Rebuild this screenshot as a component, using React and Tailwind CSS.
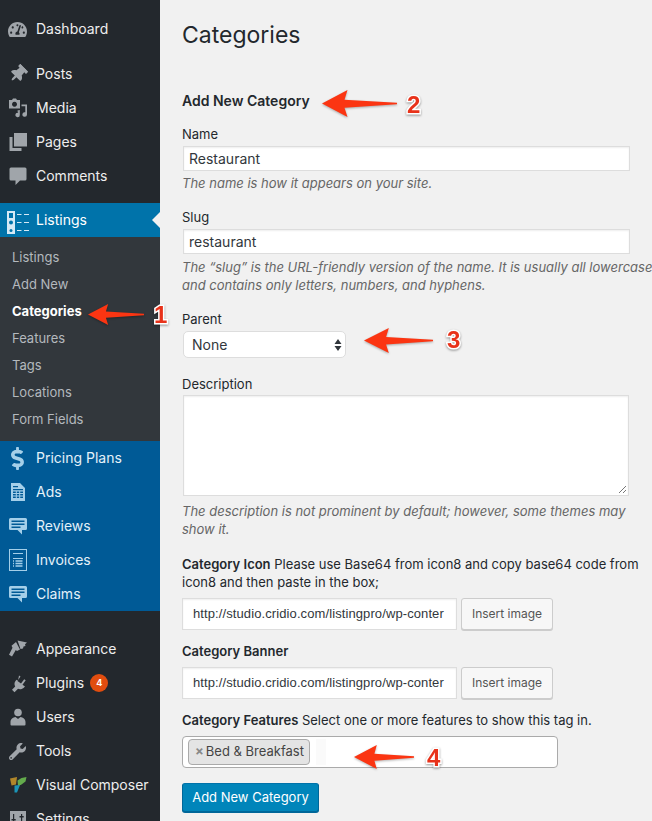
import React from 'react';
import { FaTachometerAlt, FaThumbtack, FaWrench, FaDollarSign } from 'react-icons/fa';

const PhotoIcon = () => (
  <svg viewBox="0 0 20 20" className="w-[20px] h-[20px]" fill="currentColor">
    <path d="M1 2h3l1-1.500h3l1 1.500h3v8.500h-11zM6.500 3.800a2.500 2.500 0 1 0 .01 0z" fillRule="evenodd" />
    <path d="M13.500 6.500h5.500v10a2.300 2.300 0 1 1-1.700-2.200v-6h-3.800zM9.500 12.500l2.300-.6v5a2.200 2.200 0 1 1-1.700-2.100v-1.200l-.6.1z" />
  </svg>
);

const PagesIcon = () => (
  <svg viewBox="0 0 20 20" className="w-[20px] h-[20px]" fill="currentColor">
    <path d="M6 1h13v13.500h-13z" />
    <path d="M1.500 5h3v11h9v3h-12z" />
  </svg>
);

const CommentIcon = () => (
  <svg viewBox="0 0 20 20" className="w-[20px] h-[20px]" fill="currentColor">
    <path d="M3 1.500h14a1.500 1.500 0 0 1 1.500 1.500v10a1.500 1.500 0 0 1-1.500 1.500h-5l-4.500 4.500v-4.500h-4.500a1.500 1.500 0 0 1-1.500-1.500v-10a1.500 1.500 0 0 1 1.500-1.500z" />
  </svg>
);

const ReviewIcon = () => (
  <svg viewBox="0 0 20 20" className="w-[20px] h-[20px]" fill="currentColor">
    <path
      fillRule="evenodd"
      d="M2.500 2h15a1.500 1.500 0 0 1 1.500 1.500v9a1.500 1.500 0 0 1-1.500 1.500h-3.500v4.500l-4.500-4.500h-7a1.500 1.500 0 0 1-1.500-1.500v-9a1.500 1.500 0 0 1 1.500-1.500zM3.500 4.500v1.500h13v-1.500zM3.500 7.500v1.500h13v-1.500zM3.500 10.500v1.500h9v-1.500z"
    />
  </svg>
);

const AdsIcon = () => (
  <svg viewBox="0 0 20 20" className="w-[20px] h-[20px]" fill="currentColor">
    <path
      fillRule="evenodd"
      d="M3 1h9l5 5v13h-14zM5 4v1.200h5v-1.200zM5 7v1.200h10v-1.200zM5 9.500v1.500h2.800v-1.500zM8.800 9.500v1.500h2.400v-1.500zM12.200 9.500v1.500h2.800v-1.500zM5 12v1.500h2.800v-1.500zM8.800 12v1.500h2.400v-1.500zM12.200 12v1.500h2.800v-1.500zM5 14.500v1.500h2.800v-1.500zM8.800 14.500v1.500h2.400v-1.500zM12.200 14.500v1.500h2.800v-1.500z"
    />
  </svg>
);

const InvoiceIcon = () => (
  <svg viewBox="0 0 18 22" className="w-[18px] h-[22px]" fill="none" stroke="currentColor">
    <rect x="0.500" y="0.500" width="17" height="21" />
    <path d="M4 4.500h10M4 9.500h10" />
    <path d="M6.500 12h7M6.500 14.500h7M6.500 17h7M4 12h1M4 14.500h1M4 17h1" strokeWidth="1.500" />
  </svg>
);

const ListingsIcon = () => (
  <svg viewBox="0 0 23 23" className="w-[23px] h-[23px]">
    <rect x="0" y="0" width="8" height="23" fill="#d5e9f5" />
    <circle cx="4" cy="11.500" r="2" fill="#0073aa" />
    <circle cx="4" cy="19.500" r="1.500" fill="#0073aa" />
    <rect x="2" y="2" width="4" height="5" fill="#0073aa" />
    <path d="M10 3.500h4.500M17 3.500h5M10 11.500h4.500M17 11.500h5M10 19.500h4.500M17 19.500h5" stroke="#d5e9f5" strokeWidth="1.200" />
  </svg>
);

const BrushIcon = () => (
  <svg viewBox="0 0 20 20" className="w-[20px] h-[20px]" fill="currentColor">
    <path d="M9.500 1.500L19 3.500l-2 1.700.5 1.800-2 .5-.5 2-2.500.5z" />
    <path d="M8 3l4 7.500-3 1.500-1.200-1-3.800 6.500-3-1.700 3.500-7-1-2z" />
  </svg>
);

const PlugIcon = () => (
  <svg viewBox="0 0 20 20" className="w-[20px] h-[20px]" fill="currentColor">
    <path d="M11 2.500l1.500 1-3 4.500 3.500 2.500 3.200-4.300 1.500 1-3.200 4.500 2.500 1.800-1.500 1.500c-2 1.500-4 1.500-5.500.8l-3.500 3.500-2.500-2.500 3.200-3.300c-1-1.800-1-3.800.3-5.500l1-1.300 1.500 1z" />
  </svg>
);

const UserIcon = () => (
  <svg viewBox="0 0 20 20" className="w-[20px] h-[20px]" fill="currentColor">
    <circle cx="10" cy="5.500" r="3.800" />
    <path d="M2.500 15c0-3 2.500-4.500 5-5l2.500 2 2.500-2c2.500.5 5 2 5 5v2.500a1 1 0 0 1-1 1h-13a1 1 0 0 1-1-1z" />
  </svg>
);

const ComposerIcon = () => (
  <svg viewBox="0 0 20 20" className="w-[20px] h-[20px]">
    <path d="M2 3.500l7-1.500-1 7.500-4.500 1z" fill="#b0862a" />
    <path d="M9.500 5.500l4-2.500 5-1-1 4.500-4 3-3.500 1.500z" fill="#63ab4c" />
    <path d="M6.500 10.500l5.500-.5-3 7.500h-2.500z" fill="#1b95b8" />
  </svg>
);

const SettingsIcon = () => (
  <svg viewBox="0 0 20 20" className="w-[20px] h-[20px]" fill="currentColor">
    <path
      fillRule="evenodd"
      d="M2 2h16v16h-16zM5 5v5h-1.500v1.500h1.500v5h1.200v-5h1.500v-1.500h-1.500v-5zM13 5v2h-1.500v1.500h1.500v8.500h1.200v-8.500h1.500v-1.500h-1.500v-2z"
    />
  </svg>
);

const MenuItem = ({ icon, label, badge, dim }) => (
  <div className="h-[34px] flex items-center">
    <span className={`w-[36px] flex justify-center pr-[1px] ${dim ? 'text-[#a4cfe9]' : 'text-[#a0a5aa]'}`}>{icon}</span>
    <span className={`pb-[2px] ${dim ? 'text-[#e4f1f9]' : 'text-[#eeeeee]'}`}>{label}</span>
    {badge && (
      <span className="ml-[6px] w-[18px] h-[18px] rounded-full bg-[#e14d0f] text-white text-[9px] font-bold flex items-center justify-center">
        {badge}
      </span>
    )}
  </div>
);

const SubItem = ({ label, active }) => (
  <div className={`h-[27px] pl-[12px] flex items-center text-[13px] ${active ? 'text-white font-bold' : 'text-[#b4b9be]'}`}>
    {label}
  </div>
);

const Sidebar = () => (
  <aside className="w-[160px] h-full shrink-0 bg-[#23282d] text-[14px] pt-[12px]">
    <MenuItem icon={<FaTachometerAlt size={19} />} label="Dashboard" />
    <div className="h-[11px]" />
    <MenuItem icon={<FaThumbtack size={18} className="rotate-45" />} label="Posts" />
    <MenuItem icon={<PhotoIcon />} label="Media" />
    <MenuItem icon={<PagesIcon />} label="Pages" />
    <MenuItem icon={<CommentIcon />} label="Comments" />
    <div className="h-[10px]" />
    <div className="relative h-[34px] bg-[#0073aa] flex items-center text-white">
      <span className="w-[36px] pl-[7px] mt-[5px] flex">
        <ListingsIcon />
      </span>
      <span className="pb-[2px]">Listings</span>
      <span className="absolute right-0 top-[9px] border-y-[8px] border-y-transparent border-r-[8px] border-r-[#f1f1f1]" />
    </div>
    <div className="bg-[#32373c] h-[204px] pt-[7px]">
      <SubItem label="Listings" />
      <SubItem label="Add New" />
      <SubItem label="Categories" active />
      <SubItem label="Features" />
      <SubItem label="Tags" />
      <SubItem label="Locations" />
      <SubItem label="Form Fields" />
    </div>
    <div className="bg-[#005a96]">
      <MenuItem dim icon={<FaDollarSign size={23} />} label="Pricing Plans" />
      <MenuItem dim icon={<AdsIcon />} label="Ads" />
      <MenuItem dim icon={<ReviewIcon />} label="Reviews" />
      <MenuItem dim icon={<InvoiceIcon />} label="Invoices" />
      <MenuItem dim icon={<ReviewIcon />} label="Claims" />
    </div>
    <div className="h-[21px]" />
    <MenuItem icon={<BrushIcon />} label="Appearance" />
    <MenuItem icon={<PlugIcon />} label="Plugins" badge="4" />
    <MenuItem icon={<UserIcon />} label="Users" />
    <MenuItem icon={<FaWrench size={17} />} label="Tools" />
    <MenuItem icon={<ComposerIcon />} label="Visual Composer" />
    <MenuItem icon={<SettingsIcon />} label="Settings" />
  </aside>
);

const Hint = ({ children }) => <p className="italic text-[13px] leading-[18px] text-[#666666]">{children}</p>;

const Label = ({ children }) => <div className="text-[13px] leading-[18px] text-[#23282d]">{children}</div>;

const textBox = 'block bg-white border border-[#dddddd] shadow-[inset_0_1px_2px_rgba(0,0,0,0.07)] text-[14px] text-[#32373c]';

const ImageField = ({ value }) => (
  <div className="flex gap-[4px]">
    <div className={`${textBox} w-[275px] h-[32px] pl-[10px] pr-[9px]`}>
      <div className="overflow-hidden whitespace-nowrap leading-[30px] text-[13px] tracking-[0.1px] font-['Liberation_Sans',sans-serif]">{value}</div>
    </div>
    <button className="w-[92px] h-[32px] bg-[#f7f7f7] border border-[#cccccc] rounded-[3px] shadow-[0_1px_0_#cccccc] text-[12px] text-[#555555]">
      Insert image
    </button>
  </div>
);

const Arrow = ({ className, tail }) => (
  <svg viewBox="0 0 100 100" preserveAspectRatio="none" className={`absolute drop-shadow-[0_1px_1px_rgba(0,0,0,0.3)] ${className}`}>
    <path d={`M0 50L${tail} 0L${tail - 4} 36L100 47V53L${tail - 4} 66L${tail} 100Z`} fill="#fb3512" />
  </svg>
);

const Num = ({ className, children }) => (
  <span className={`absolute text-[24px] leading-none font-bold text-[#e8321a] font-['Liberation_Sans',sans-serif] [-webkit-text-stroke:3px_#ffffff] [paint-order:stroke_fill] drop-shadow-[0_1px_1px_rgba(0,0,0,0.4)] ${className}`}>
    {children}
  </span>
);

export default function App() {
  return (
    <div className="relative flex w-full h-[821px] overflow-hidden bg-[#f1f1f1] font-['Inter',sans-serif]">
      <Sidebar />
      <main className="flex-1 min-w-0 pl-[22px] whitespace-nowrap">
        <h1 className="text-[23px] leading-[29px] text-[#23282d] mt-[21px]">Categories</h1>
        <h2 className="text-[14px] font-semibold leading-[18px] text-[#23282d] mt-[42px]">Add New Category</h2>
        <div className="mt-[15px]">
          <Label>Name</Label>
        </div>
        <div className={`${textBox} ml-[1px] mt-[3px] w-[447px] h-[25px] pl-[5px] leading-[23px]`}>Restaurant</div>
        <div className="mt-[3px]">
          <Hint>The name is how it appears on your site.</Hint>
        </div>
        <div className="mt-[16px]">
          <Label>Slug</Label>
        </div>
        <div className={`${textBox} ml-[1px] mt-[3px] w-[447px] h-[25px] pl-[5px] leading-[23px]`}>restaurant</div>
        <div className="mt-[4px]">
          <Hint>The “slug” is the URL-friendly version of the name. It is usually all lowercase</Hint>
          <Hint>and contains only letters, numbers, and hyphens.</Hint>
        </div>
        <div className="mt-[16px]">
          <Label>Parent</Label>
        </div>
        <div className="ml-[1px] mt-[3px] w-[163px] h-[27px] pl-[8px] pr-[3px] bg-white border border-[#dddddd] rounded-[5px] flex items-center justify-between text-[14px] text-[#32373c]">
          None
          <svg viewBox="0 0 8 14" className="w-[8px] h-[14px]" fill="#32373c">
            <path d="M4 1l3.500 5h-7zM4 13l3.500-5h-7z" />
          </svg>
        </div>
        <div className="mt-[17px]">
          <Label>Description</Label>
        </div>
        <div className={`${textBox} relative ml-[1px] mt-[2px] w-[446px] h-[101px]`}>
          <svg viewBox="0 0 9 9" className="absolute right-[1px] bottom-[1px] w-[9px] h-[9px]" stroke="#777777" fill="none">
            <path d="M1 8l7-7M5 8l3-3" />
          </svg>
        </div>
        <div className="mt-[6px]">
          <Hint>The description is not prominent by default; however, some themes may</Hint>
          <Hint>show it.</Hint>
        </div>
        <div className="text-[13px] leading-[18px] text-[#23282d] mt-[17px]">
          <b className="font-semibold">Category Icon</b> Please use Base64 from icon8 and copy base64 code from
          <br />
          icon8 and then paste in the box;
        </div>
        <div className="mt-[7px]">
          <ImageField value="http://studio.cridio.com/listingpro/wp-conter" />
        </div>
        <div className="text-[13px] font-semibold leading-[18px] text-[#23282d] mt-[12px]">Category Banner</div>
        <div className="mt-[7px]">
          <ImageField value="http://studio.cridio.com/listingpro/wp-conter" />
        </div>
        <div className="text-[13px] leading-[18px] text-[#23282d] mt-[12px]">
          <b className="font-semibold">Category Features</b> Select one or more features to show this tag in.
        </div>
        <div className="mt-[7px] w-[376px] h-[32px] bg-white border border-[#aaaaaa] rounded-[4px] flex items-center pl-[5px]">
          <span className="h-[26px] pl-[6px] pr-[5px] bg-[#e4e4e4] border border-[#aaaaaa] rounded-[4px] flex items-center text-[13px] text-[#444444]">
            <span className="text-[#888888] font-bold text-[13px] mr-[2px]">×</span>Bed &amp; Breakfast
          </span>
          <span className="ml-[6px] w-[10px] h-[26px] bg-[#fafafa]" />
        </div>
        <button className="mt-[15px] w-[137px] h-[29px] bg-[#0085ba] border border-[#006799] border-t-[#0073aa] rounded-[3px] shadow-[0_1px_0_#006799] text-[13px] text-white">
          Add New Category
        </button>
      </main>

      <Arrow tail={36} className="left-[88px] top-[304px] w-[56px] h-[21px]" />
      <Num className="left-[154px] top-[303px]">1</Num>
      <Arrow tail={34} className="left-[322px] top-[90px] w-[75px] h-[27px]" />
      <Num className="left-[407px] top-[93px]">2</Num>
      <Arrow tail={36} className="left-[364px] top-[328px] w-[69px] h-[25px]" />
      <Num className="left-[447px] top-[328px]">3</Num>
      <Arrow tail={38} className="left-[354px] top-[745px] w-[60px] h-[24px]" />
      <Num className="left-[427px] top-[746px]">4</Num>
    </div>
  );
}
